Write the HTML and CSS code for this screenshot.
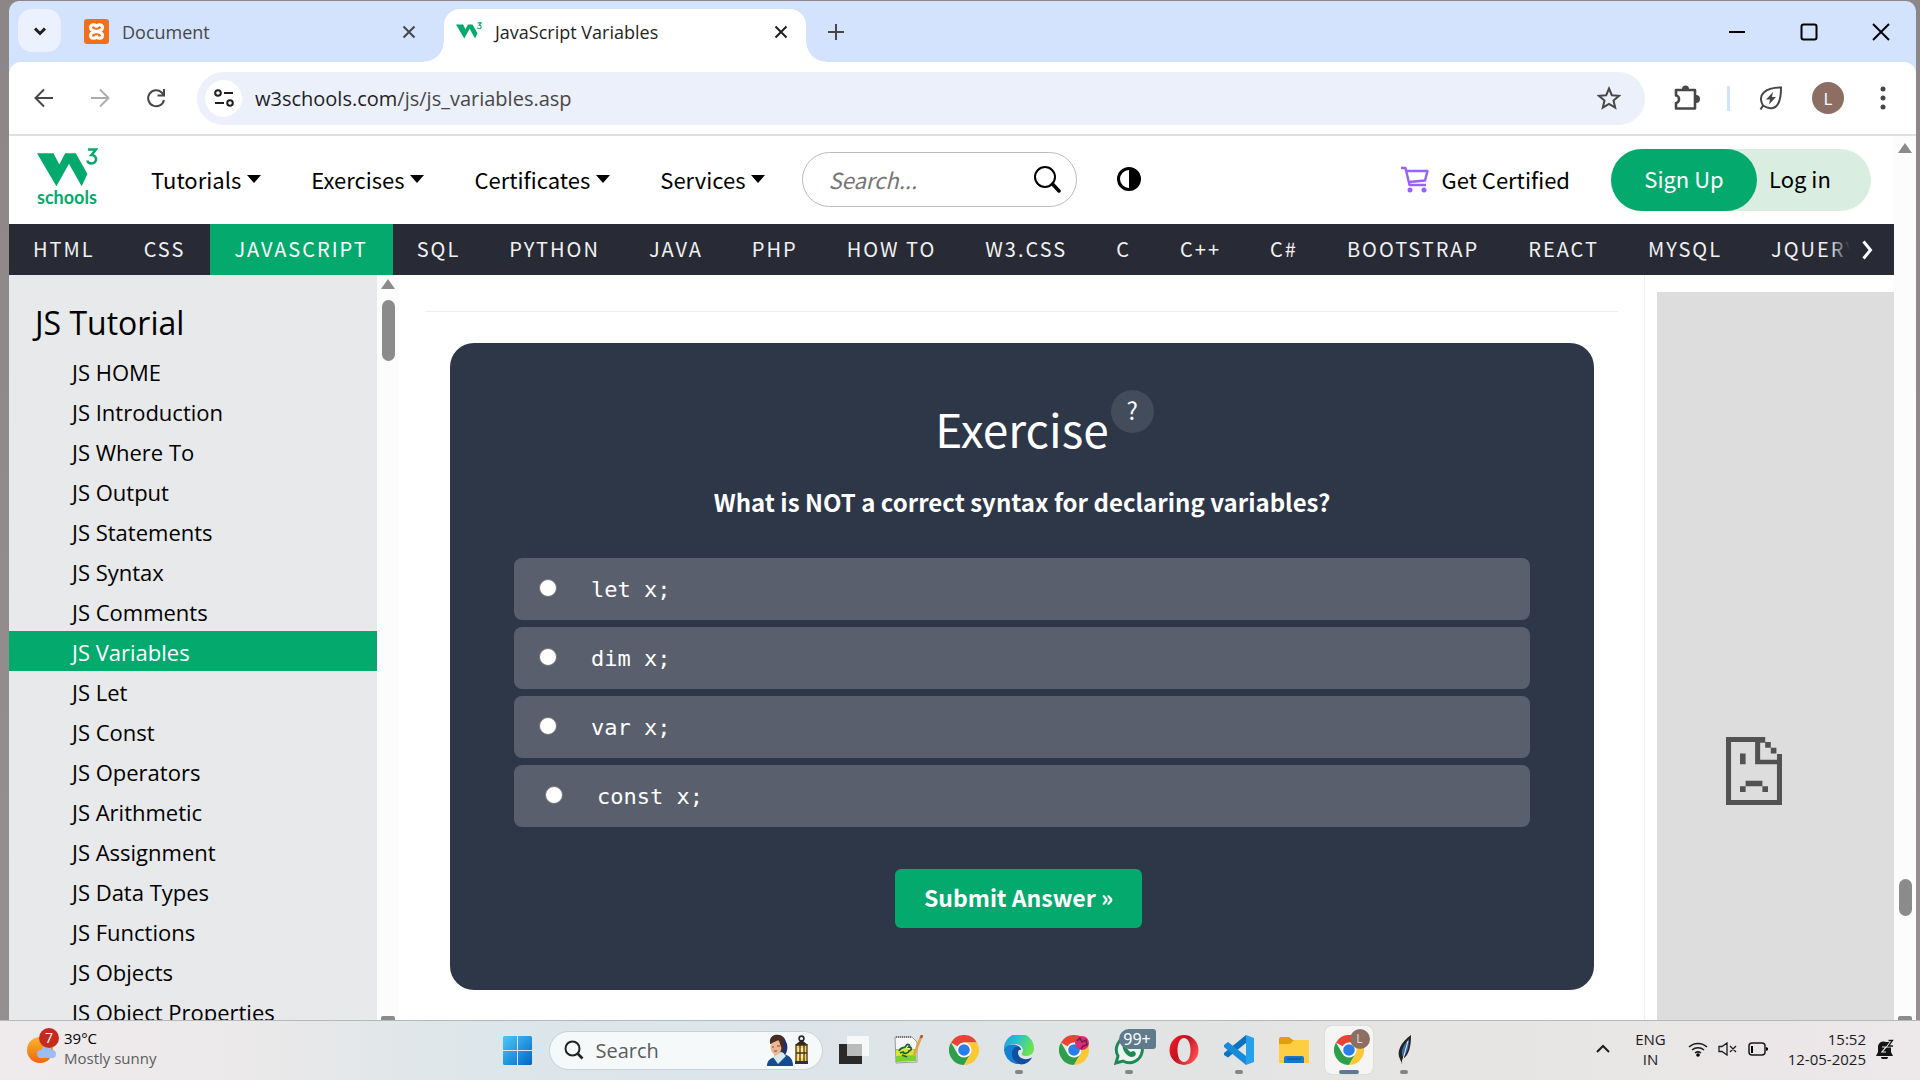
FILE: index.html
```html
<!DOCTYPE html>
<html lang="en">
<head>
<meta charset="utf-8">
<title>JavaScript Variables</title>
<link rel="stylesheet" href="styles.css">
</head>
<body>
<svg class="defs" aria-hidden="true">
  <symbol id="chrome" viewBox="0 0 30 30">
    <path d="M15 15 2 7.5A15 15 0 0 1 28 7.5H15z" fill="#ea4335"/>
    <path d="M2 7.5A15 15 0 0 0 15 30l6.500-11.250L15 15 8.500 18.750z" fill="#2e9e4b"/>
    <path d="M28 7.500A15 15 0 0 1 15 30l6.500-11.250L15 7.500z" fill="#fcc934"/>
    <circle cx="15" cy="15" r="7.500" fill="#fff"/><circle cx="15" cy="15" r="5.800" fill="#2b7de9"/>
  </symbol>
</svg>
<div class="desktop">
  <div class="window">
    <header class="tabstrip">
      <button class="tab-search" aria-label="Search tabs"><svg width="14" height="14" viewBox="0 0 14 14"><path d="M2 4.500l5 5 5-5" class="ln3"/></svg></button>
      <div class="tab">
        <svg width="25" height="25" viewBox="0 0 25 25"><rect width="25" height="25" rx="3" fill="#f0701c"/><path d="M12.500 12.500c-3-1-6-.8-6-3.800 0-4 6-4 6 0 0-4 6-4 6 0 0 3-3 2.800-6 3.800 3 1 6 .8 6 3.800 0 4-6 4-6 0 0 4-6 4-6 0 0-3 3-2.800 6-3.800z" fill="none" stroke="#fff" stroke-width="3"/><path d="M10 12.500h5" stroke="#fff" stroke-width="3"/></svg>
        <span class="tab-title">Document</span>
        <button class="x" aria-label="Close"><svg width="14" height="14" viewBox="0 0 14 14"><path d="M1.500 1.500l11 11M12.500 1.500l-11 11" class="ln2"/></svg></button>
      </div>
      <div class="tab active">
        <svg width="26" height="20" viewBox="0 0 61 46"><use href="#w3mark"/></svg>
        <span class="tab-title">JavaScript Variables</span>
        <button class="x" aria-label="Close"><svg width="14" height="14" viewBox="0 0 14 14"><path d="M1.500 1.500l11 11M12.500 1.500l-11 11" class="ln2"/></svg></button>
      </div>
      <button class="newtab" aria-label="New tab"><svg width="16" height="16" viewBox="0 0 16 16"><path d="M8 0v16M0 8h16" class="ln2"/></svg></button>
      <div class="winctl">
        <button aria-label="Minimize"><svg width="18" height="18" viewBox="0 0 18 18"><path d="M1 9h16" class="ln2"/></svg></button>
        <button aria-label="Maximize"><svg width="18" height="18" viewBox="0 0 18 18"><rect x="1.500" y="1.500" width="15" height="15" rx="2" class="ln2"/></svg></button>
        <button aria-label="Close window"><svg width="18" height="18" viewBox="0 0 18 18"><path d="M1 1l16 16M17 1L1 17" class="ln2"/></svg></button>
      </div>
    </header>
    <div class="toolbar">
      <button aria-label="Back"><svg width="20" height="20" viewBox="0 0 20 20"><path d="M19 10H2M10 1.500L1.500 10l8.500 8.500" class="ln2"/></svg></button>
      <button class="dim" aria-label="Forward"><svg width="20" height="20" viewBox="0 0 20 20"><path d="M1 10h17M10 1.500l8.500 8.500-8.500 8.500" class="ln2"/></svg></button>
      <button aria-label="Reload"><svg width="20" height="20" viewBox="0 0 20 20"><path d="M18 12a8 8 0 1 1-2.300-7.500L18 7M18 1v6.500h-6.500" class="ln2"/></svg></button>
      <div class="omnibox">
        <button class="tune" aria-label="Site information"><svg width="20" height="20" viewBox="0 0 20 20"><circle cx="4" cy="5" r="2.800" class="ln2"/><circle cx="16" cy="15" r="2.800" class="ln2"/><path d="M10 5h9M1 15h9" class="ln2"/></svg></button>
        <div class="url">w3schools.com<span>/js/js_variables.asp</span></div>
        <svg width="24" height="24" viewBox="0 0 24 24"><path d="M12 2.500l2.800 6.700 7.200.6-5.500 4.700 1.700 7.100L12 17.800l-6.200 3.800 1.700-7.100L2 9.800l7.200-.6z" class="ln2"/></svg>
      </div>
      <svg class="puzzle" width="28" height="28" viewBox="0 0 28 28"><path d="M3 6h19v18.500H3v-5.500c4 0 4-7.500 0-7.500z" fill="none" stroke="#474747" stroke-width="2.600" stroke-linejoin="round"/><path d="M9 5a3.500 3.500 0 0 1 7 0zM23 11a4 4 0 0 1 0 8z" fill="#474747"/></svg>
      <span class="bar"></span>
      <svg class="leaf" width="26" height="26" viewBox="0 0 26 26"><path d="M2.500 24.500L5 20.500C-1 10 7 2.500 23 2.500c0 13-3 22-12 20.500-3-.5-6-2.500-6-2.500z" class="ln2"/><path d="M15 7l-7 7.500h4l-1 5 7-7.500h-4z" fill="#474747"/></svg>
      <button class="avatar">L</button>
      <svg class="dots" width="6" height="24" viewBox="0 0 6 24"><circle cx="3" cy="3" r="2.500"/><circle cx="3" cy="12" r="2.500"/><circle cx="3" cy="21" r="2.500"/></svg>
    </div>
    <div class="viewport">
      <div class="page">
        <nav class="site">
          <a class="logo" href="#" aria-label="w3schools"><svg width="61" height="62" viewBox="0 0 61 62"><g id="w3mark"><path d="M0 6h17l6 13 6-13h11l12 24-6 14-13-26-13 26z" fill="#04aa6d" transform="scale(.97 .87) translate(0 0)"/><path d="M51 1.500h8l-4.500 5.500c6 0 6 8.500 0 8.500-2.500 0-4-1.500-4-3" fill="none" stroke="#04aa6d" stroke-width="2.600"/></g><text x="0" y="56" class="logotext">schools</text></svg></a>
          <a class="menu" href="#">Tutorials<i></i></a>
          <a class="menu" href="#">Exercises<i></i></a>
          <a class="menu" href="#">Certificates<i></i></a>
          <a class="menu" href="#">Services<i></i></a>
          <label class="search"><input type="text" placeholder="Search..." aria-label="Search"><svg width="28" height="28" viewBox="0 0 28 28"><circle cx="12" cy="12" r="10" fill="none" stroke="#000" stroke-width="2"/><path d="M19.500 19l6.500 7" stroke="#000" stroke-width="3.500" stroke-linecap="round"/></svg></label>
          <button class="contrast" aria-label="Toggle dark mode"><svg width="24" height="24" viewBox="0 0 24 24"><circle cx="12" cy="12" r="10.500" fill="none" stroke="#000" stroke-width="3"/><path d="M12 1a11 11 0 0 1 0 22z"/></svg></button>
          <a class="cert" href="#"><svg width="28" height="27" viewBox="0 0 28 27"><path d="M0 2h4.500l4 17H25M5.500 5H26.500l-2.500 9.500L8 16" fill="none" stroke="#9763f6" stroke-width="2.400" stroke-linejoin="round"/><circle cx="9" cy="24" r="2.500" fill="#9763f6"/><circle cx="23" cy="24" r="2.500" fill="#9763f6"/></svg>Get Certified</a>
          <div class="auth"><a class="signup" href="#">Sign Up</a><a class="login" href="#">Log in</a></div>
        </nav>
        <nav class="topics">
          <a href="#">HTML</a><a href="#">CSS</a><a href="#" class="on">JAVASCRIPT</a><a href="#">SQL</a><a href="#">PYTHON</a><a href="#">JAVA</a><a href="#">PHP</a><a href="#">HOW TO</a><a href="#">W3.CSS</a><a href="#">C</a><a href="#">C++</a><a href="#">C#</a><a href="#">BOOTSTRAP</a><a href="#">REACT</a><a href="#">MYSQL</a><a href="#">JQUERY</a>
          <button class="next" aria-label="Scroll right"><svg width="12" height="20" viewBox="0 0 12 20"><path d="M1.500 1.500L8.500 10l-7 8.500" fill="none" stroke="#fff" stroke-width="3"/></svg></button>
        </nav>
        <div class="content">
          <aside class="sidebar">
            <h2>JS Tutorial</h2>
            <a href="#">JS HOME</a><a href="#">JS Introduction</a><a href="#">JS Where To</a><a href="#">JS Output</a><a href="#">JS Statements</a><a href="#">JS Syntax</a><a href="#">JS Comments</a><a href="#" class="on">JS Variables</a><a href="#">JS Let</a><a href="#">JS Const</a><a href="#">JS Operators</a><a href="#">JS Arithmetic</a><a href="#">JS Assignment</a><a href="#">JS Data Types</a><a href="#">JS Functions</a><a href="#">JS Objects</a><a href="#">JS Object Properties</a>
          </aside>
          <div class="sbar side"><i class="up"></i><i class="thumb"></i><i class="down"></i></div>
          <main>
            <hr>
            <form class="card">
              <h1>Exercise<sup>?</sup></h1>
              <h3>What is NOT a correct syntax for declaring variables?</h3>
              <label><input type="radio" name="q">let x;</label>
              <label><input type="radio" name="q">dim x;</label>
              <label><input type="radio" name="q">var x;</label>
              <label class="last"><input type="radio" name="q">const x;</label>
              <button type="button">Submit Answer »</button>
            </form>
          </main>
          <div class="right"><div class="ad"><svg width="56" height="68" viewBox="0 0 10 12" preserveAspectRatio="none"><path fill="#525252" d="M0 0h7v1H6.100v3H9.100V3H10v9H0V0zM.9 .9v10.200h8.200V4.800H5.200V.9zM7 .9h1v1H7zM8 1.900h1v1H8zM2.500 2.900h1v1.900h-1zM3.500 7.700h3v1h-3zM2.500 8.700h1v1h-1zM6.500 8.700h1v1h-1z" fill-rule="evenodd"/></svg></div></div>
        </div>
      </div>
      <div class="sbar outer"><i class="up"></i><i class="thumb"></i><i class="down"></i></div>
    </div>
  </div>
  <footer class="taskbar">
    <div class="weather">
      <svg width="34" height="36" viewBox="0 0 34 36"><defs><linearGradient id="sun" x2="0" y2="1"><stop stop-color="#f5b82e"/><stop offset="1" stop-color="#f0650e"/></linearGradient></defs><circle cx="13" cy="22" r="13" fill="url(#sun)"/><path d="M14 30a4 4 0 0 1 0-8 6 6 0 0 1 11 0 4 4 0 0 1 0 8z" fill="#9dbcf2"/><circle cx="22" cy="10" r="10" fill="#c42b1c"/><text x="22" y="15" text-anchor="middle" class="badge">7</text></svg>
      <div><b>39°C</b><span>Mostly sunny</span></div>
    </div>
    <div class="apps">
      <button class="app start" aria-label="Start"><svg width="29" height="29" viewBox="0 0 29 29"><defs><linearGradient id="win" x2="1" y2="1"><stop stop-color="#4cc8fb"/><stop offset="1" stop-color="#0067c6"/></linearGradient></defs><path d="M1 0h13v14H0V1zM15 0h13l1 1v13H15zM0 15h14v14H1l-1-1zM15 15h14v13l-1 1H15z" fill="url(#win)"/></svg></button>
      <label class="tsearch"><svg width="20" height="20" viewBox="0 0 20 20"><circle cx="8.500" cy="8.500" r="7" fill="none" stroke="#222" stroke-width="2"/><path d="M13.500 13.500l5 5" stroke="#222" stroke-width="2.600"/></svg><input type="text" placeholder="Search" aria-label="Search Windows">
        <svg width="43" height="32" viewBox="0 0 43 32"><path d="M3 9C2 2 8 0 12 1c6 1 8 6 7 14l-3 5z" fill="#4a2c23"/><path d="M16 5c6 3 5 12 2 16l-3-4z" fill="#22306f"/><ellipse cx="9" cy="13" rx="5.500" ry="7.500" fill="#e9b795"/><path d="M7 18h7v7H7z" fill="#e9b795"/><path d="M3 10c0-6 3-9 8-9 6 0 7 7 5 14-2-1-3-5-4-9-3 1-5 2-9 4z" fill="#4a2c23"/><path d="M0 32c0-6 4-8 8-9l9-3c6 2 9 5 9 12z" fill="#164a91"/><path d="M6 23l9-5 4 4-8 8z" fill="#d5e9ee"/><path d="M5 13h2M10 12h3M7 17h3" stroke="#8f4134"/><circle cx="34.500" cy="4.500" r="2.400" fill="none" stroke="#292929" stroke-width="1.600"/><path d="M28 11l5-4h3l5 4z" fill="#292929"/><path d="M29 11h11v16H29z" fill="#ffd34f"/><path d="M31 14h7v10h-7z" fill="#ffe99a"/><path d="M29 11h11v17H29zM33 11v17M37 11v17M29 19h11" fill="none" stroke="#463518" stroke-width="1.300"/><path d="M28 27h13v3H28z" fill="#333"/></svg></label>
      <button class="app" aria-label="Task view"><svg width="30" height="30" viewBox="0 0 30 30"><path d="M0 9h23v20H0z" fill="#2b2a29"/><path d="M8 1h22v20H8z" fill="#f8f8f8" fill-opacity=".9"/><path d="M8 9h15v12H8z" fill="#bbb"/></svg></button>
      <button class="app" aria-label="Notepad++"><svg width="30" height="30" viewBox="0 0 30 30"><path d="M1 2h17l5 5v20L2 28z" fill="#f6f6f6" stroke="#999"/><path d="M2 2h16" stroke="#777" stroke-width="2" stroke-dasharray="1 1"/><path d="M2 14h20v12L2 27z" fill="#7fd02f"/><path d="M2 15l9-2 11 2v5L2 21z" fill="#d5e638"/><path d="M5 16c2-5 6-2 7-5 1-3 5-1 3 1 4 0 2 4 0 4-1 3-5 3-6 1l-3 1M8 20l5 2" fill="none" stroke="#1d6527" stroke-width="1.800"/><path d="M27 2L20 20" stroke="#e6a03c" stroke-width="2.500"/><path d="M28 0l-1 3" stroke="#b84b43" stroke-width="2.500"/></svg></button>
      <button class="app" aria-label="Chrome"><svg width="30" height="30"><use href="#chrome"/></svg></button>
      <button class="app run" aria-label="Edge"><svg width="30" height="30" viewBox="0 0 30 30"><defs><linearGradient id="eg" x2="1" y2=".4"><stop stop-color="#219be0"/><stop offset=".5" stop-color="#28c5cc"/><stop offset="1" stop-color="#6be24e"/></linearGradient></defs><path d="M0 14A15 15 0 0 1 30 13c0 6-4 8-8 8-3 0-5-1-4-3 3-5-2-9-7-9S2 11 0 14z" fill="url(#eg)"/><path d="M0 14c3-6 16-6 17 1-4-2-7 5-2 9 4 3 9 2 12-1A15 15 0 0 1 0 15z" fill="#1380d3"/><path d="M11 12c-6 5-3 15 6 17.500 5 0 9-3 11-7-8 4-14 0-14-5 0-2 1-3 3-3 0-2-3-4-6-2.500z" fill="#114f9f"/></svg></button>
      <button class="app" aria-label="Chrome profile"><svg width="30" height="30"><use href="#chrome"/><circle cx="23" cy="8" r="7" fill="#d62f75"/><path d="M18 6l3-3 2 4 4-2 1 5-4 1-2 3" fill="none" stroke="#7d1746" stroke-width="1.500"/></svg></button>
      <button class="app run" aria-label="WhatsApp"><svg width="30" height="30" viewBox="0 0 30 30"><path d="M2 28l2-7A13 13 0 1 1 9 26z" fill="#edf3f0" stroke="#1d8a54" stroke-width="3"/><path d="M9 9c1-3 4-2 4 0s-1 2 0 4 3 4 4 4 2-2 4 0 0 5-3 5C13 22 7 14 9 9z" fill="#1d8a54"/></svg><em>99+</em></button>
      <button class="app" aria-label="Opera"><svg width="30" height="30" viewBox="0 0 30 30"><defs><linearGradient id="op" x2="1" y2=".6"><stop stop-color="#ff1b2d"/><stop offset=".5" stop-color="#c3101d"/><stop offset="1" stop-color="#ff4a50"/></linearGradient></defs><path fill-rule="evenodd" d="M15 0a14.500 15 0 1 0 0 30 14.500 15 0 1 0 0-30zm0 3c4 0 6.500 5 6.500 12S19 27 15 27 8.500 22 8.500 15 11 3 15 3z" fill="url(#op)"/></svg></button>
      <button class="app run" aria-label="Visual Studio Code"><svg width="30" height="30" viewBox="0 0 30 30"><path d="M22 0v8L4 22.500 0 20v-2z" fill="#0b72c0"/><path d="M0 10l4-3 18 14v9L0 12z" fill="#168bd8"/><path d="M22 0l8 3v24l-8 3z" fill="#27a1ee"/></svg></button>
      <button class="app" aria-label="File Explorer"><svg width="30" height="30" viewBox="0 0 30 30"><path d="M0 4q0-2 2-2h8l4 3h14v6H0z" fill="#dfa00b"/><path d="M0 9h11l4-4h15v23H0z" fill="#ffcd42"/><path d="M5 28v-5q0-2 2-2h16q2 0 2 2v5z" fill="#1279cc"/><path d="M8 24h14" stroke="#0b4f91"/></svg></button>
      <button class="app current" aria-label="Chrome window"><svg width="30" height="30"><use href="#chrome"/></svg><strong>L</strong></button>
      <button class="app run" aria-label="Python IDLE"><svg width="30" height="30" viewBox="0 0 30 30"><path d="M22 0c0 12-2 20-8 24l-1 5-2-5c-4-7 1-17 11-24z" fill="#222"/><path d="M20 4c0 9-2 15-6 18-3-5 0-12 6-18z" fill="#356fae"/><path d="M19 6l-6 22" stroke="#eee"/></svg></button>
    </div>
    <div class="tray">
      <svg width="16" height="10" viewBox="0 0 16 10"><path d="M2 8l6-6 6 6" fill="none" stroke="#1b1b1b" stroke-width="2"/></svg>
      <div class="lang">ENG<br>IN</div>
      <svg width="20" height="16" viewBox="0 0 20 16"><path d="M1 6a13 13 0 0 1 18 0M4 9a9 9 0 0 1 12 0M7 12a5 5 0 0 1 6 0" fill="none" stroke="#1b1b1b" stroke-width="1.500"/><circle cx="10" cy="14" r="1.800"/></svg>
      <svg width="20" height="14" viewBox="0 0 20 14"><path d="M1 4.500h3L9 1v12L4 9.500H1zM12 4l6 6M18 4l-6 6" fill="none" stroke="#1b1b1b" stroke-width="1.300"/></svg>
      <svg width="20" height="14" viewBox="0 0 20 14"><rect x="1" y="1" width="16" height="12" rx="3" fill="none" stroke="#1b1b1b" stroke-width="1.500"/><path d="M3 4h2v7H3zM18 5l2 1v2l-2 1z"/></svg>
      <div class="clock">15:52<br>12-05-2025</div>
      <svg width="18" height="20" viewBox="0 0 18 20"><path d="M0 17l2-4V8a5.500 5.500 0 0 1 8-5h4v5h1v5l2 4zM5 18h7a3.500 2.500 0 0 1-7 0z" fill="#151515"/><path d="M6 8h4l-4 5h4" fill="none" stroke="#eee" stroke-width="1.200"/><path d="M12 1.500h4.500L12.500 7H17" fill="none" stroke="#eee" stroke-width="3"/><path d="M12.500 1.500h4L12.500 7H17" fill="none" stroke="#151515" stroke-width="1.300"/></svg>
    </div>
  </footer>
</div>
</body>
</html>
```
FILE: styles.css
```css
* { box-sizing: border-box; }
body { margin: 0; font-family: "Open Sans", "Noto Sans", sans-serif; color: #000; }
a { color: inherit; text-decoration: none; }
button { border: 0; padding: 0; background: none; font: inherit; color: inherit; display: flex; align-items: center; justify-content: center; }
input { font: inherit; border: 0; background: none; padding: 0; outline: 0; min-width: 0; }
svg { display: block; flex: none; }
.defs { position: absolute; width: 0; height: 0; }
.ln2 { fill: none; stroke: currentColor; stroke-width: 2; }
.ln3 { fill: none; stroke: currentColor; stroke-width: 3; }

.desktop { height: 100vh; display: flex; flex-direction: column; background: linear-gradient(#8c8686, #969092); overflow: hidden; }
.window { flex: 1; min-height: 0; display: flex; flex-direction: column; margin: 1px 4px 0 9px; border-radius: 10px 10px 0 0; background: #d3e2fd; overflow: hidden; }

/* Browser tabs */
.tabstrip { height: 61px; flex: none; display: flex; align-items: flex-start; padding: 8px 8px 0 9px; color: #1f1f1f; }
.tab-search { width: 43px; height: 43px; border-radius: 14px; background: #ebf1fe; }
.tab { width: 369px; height: 53px; display: flex; align-items: center; padding: 0 14px 8px 23px; font-size: 18px; color: #474747; }
.tab:not(.active) { margin-right: 14px; }
.tab-title { flex: 1; margin-left: 13px; white-space: nowrap; }
.tab.active { position: relative; width: 362px; padding: 0 18px 8px 12px; border-radius: 16px 16px 0 0; background: #fff; color: #1f1f1f; }
.tab.active::before, .tab.active::after { content: ""; position: absolute; bottom: 0; width: 20px; height: 20px; }
.tab.active::before { right: 100%; background: radial-gradient(circle at 0 0, #d3e2fd 19px, #fff 20px); }
.tab.active::after { left: 100%; background: radial-gradient(circle at 100% 0, #d3e2fd 19px, #fff 20px); }
.newtab { width: 60px; height: 46px; color: #474747; }
.winctl { margin-left: auto; display: flex; gap: 54px; padding: 14px 18px 0 0; color: #000; }

.toolbar { height: 74px; flex: none; display: flex; align-items: center; padding: 0 30px 0 25px; background: #fff; border-radius: 12px 12px 0 0; border-bottom: 2px solid #dfe0e1; color: #474747; }
.toolbar > button + button { margin-left: 36px; }
.toolbar .dim { color: #adadad; }
.omnibox { flex: 1; height: 53px; margin-left: 31px; display: flex; align-items: center; padding: 0 24px 0 8px; border-radius: 27px; background: #ecf0fa; }
.tune { width: 37px; height: 37px; border-radius: 50%; background: #fff; color: #1f1f1f; }
.url { flex: 1; margin-left: 13px; font-size: 20px; color: #1f1f1f; }
.url span { color: #474747; }
.puzzle { margin-left: 28px; }
.bar { width: 3px; height: 25px; margin-left: 26px; background: #d3e2fd; }
.leaf { margin-left: 28px; }
.toolbar > .avatar { width: 32px; height: 32px; margin: 0 36px 0 28px; border-radius: 50%; background: #8d6e63; color: #fff; font-size: 17px; }
.dots { fill: #474747; }

.viewport { flex: 1; min-height: 0; display: flex; background: #fff; }
.page { flex: 1; min-width: 0; display: flex; flex-direction: column; }

/* Site header */
.site { height: 88px; flex: none; display: flex; align-items: center; padding: 0 23px 2px 28px; font-family: "Noto Sans CJK SC", sans-serif; font-size: 22px; }
.logo { margin-right: 53px; }
.logotext { font: 700 18px Lato, sans-serif; fill: #04aa6d; }
.menu { display: flex; align-items: center; margin-right: 50px; }
.menu i { margin-left: 6px; border: 7px solid transparent; border-top: 8px solid #000; border-bottom: 0; }
.search { width: 275px; height: 55px; margin-left: -13px; display: flex; align-items: center; padding: 0 15px 0 25px; border: 1px solid #bbb; border-radius: 28px; }
.search input { flex: 1; font-style: italic; }
.search input::placeholder { color: #757575; }
.contrast { margin-left: 40px; }
.cert { margin-left: auto; display: flex; align-items: center; gap: 13px; }
.auth { display: flex; margin: 2px 0 0 41px; height: 62px; line-height: 58px; border-radius: 31px; background: #d9eee1; }
.signup { width: 146px; border-radius: 31px; background: #04aa6d; color: #fff; text-align: center; }
.login { width: 114px; padding-left: 12px; }

.topics { position: relative; height: 51px; flex: none; display: flex; overflow: hidden; background: #282a35; color: #f1f1f1; font-family: "Noto Sans CJK SC", sans-serif; font-size: 20px; line-height: 50px; letter-spacing: 2px; white-space: nowrap; }
.topics a { padding: 0 25px 0 24px; }
.topics .on { background: #04aa6d; color: #fff; }
.next { position: absolute; right: 0; top: 0; width: 64px; height: 51px; padding-left: 12px; background: linear-gradient(90deg, #282a3500, #282a35 20px); }

.content { flex: 1; min-height: 0; display: flex; }
.sidebar { width: 368px; overflow: hidden; background: #e7e9eb; font-size: 22px; line-height: 38px; }
.sidebar h2 { margin: 0; padding: 24px 26px 4px; font-weight: 400; font-size: 32px; line-height: 48px; }
.sidebar a { display: block; padding: 2px 0 0 63px; }
.sidebar .on { background: #04aa6d; color: #fff; }

.sbar { width: 22px; flex: none; display: flex; flex-direction: column; align-items: center; background: #fcfcfc; overflow: hidden; }
.sbar i { flex: none; }
.up { border: 7px solid transparent; border-top: 0; border-bottom: 10px solid #8b8b8b; }
.thumb { width: 13px; border-radius: 7px; background: #8b8b8b; }
.down { width: 14px; height: 4px; margin-top: auto; background: #8b8b8b; border-radius: 2px 2px 0 0; }
.side { padding-top: 4px; }
.side .thumb { height: 61px; margin-top: 11px; }
.outer { padding-top: 7px; }
.outer .thumb { height: 37px; margin-top: 726px; }

main { flex: 1; min-width: 0; padding: 36px 26px 0; }
hr { margin: 0 0 31px; border: 0; border-top: 1px solid #eee; }
.card { height: 647px; margin: 0 24px 0 25px; padding: 47px 64px; border-radius: 24px; background: #2d3748; color: #fff; font-family: "Noto Sans CJK SC", sans-serif; text-align: center; }
.card h1 { margin: 0; display: flex; justify-content: center; font-size: 46px; line-height: 76px; font-weight: 400; }
.card sup { width: 43px; height: 43px; margin: 0 -45px 0 2px; border-radius: 50%; background: #434c5b; font-size: 24px; line-height: 40px; }
.card h3 { margin: 17px 0 38px; font-size: 24px; line-height: 37px; }
.card label { display: flex; align-items: center; height: 62px; margin-bottom: 7px; padding-left: 25px; border-radius: 8px; background: #595f6d; font-family: "DejaVu Sans Mono", monospace; font-size: 22px; }
.card label.last { padding-left: 31px; }
.card input { appearance: none; width: 18px; height: 18px; margin: 0 34px 2px 0; border: 1px solid #767676; border-radius: 50%; background: #fff; }
.card button { width: 247px; height: 59px; margin: 42px auto 0 381px; padding-bottom: 3px; border-radius: 6px; background: #04aa6d; font-weight: 700; font-size: 23px; }
.right { width: 250px; flex: none; padding: 17px 0 0 12px; border-left: 1px solid #eee; }
.ad { height: 100%; padding: 445px 0 0 69px; background: #ddd; }

/* Taskbar */
.taskbar { height: 60px; flex: none; display: flex; align-items: center; padding: 0 26px 1px 27px; border-top: 1px solid #b5bab9; background: linear-gradient(90deg, #efebec, #ece9ea 12%, #dde6e9 24%, #dbe5ec 36%, #e1e4e3 60%, #e7e5e4 78%, #ede8ea); font-size: 15px; }
.weather { flex: 1; display: flex; gap: 3px; line-height: 20px; padding-bottom: 4px; }
.weather b, .weather span { display: block; font-weight: 400; }
.weather span { color: #5c5c5c; }
.badge { font-size: 14px; fill: #fff; }
.apps { display: flex; align-items: center; padding-left: 7px; }
.app { position: relative; width: 48px; height: 48px; margin-right: 7px; }
.tsearch { width: 274px; height: 39px; margin-right: 7px; display: flex; align-items: center; padding: 0 12px 0 14px; border: 1px solid #c9d1d4; border-radius: 20px; background: #f6f9fa; font-size: 20px; }
.tsearch input { flex: 1; margin-left: 12px; }
.tsearch input::placeholder { color: #5c5c5c; }
.run::after, .current::after { content: ""; position: absolute; bottom: 0; left: 20px; width: 8px; height: 4px; border-radius: 2px; background: #858585; }
.current { background: #f5f5f4; border-radius: 6px; box-shadow: 0 0 1px #aaa; }
.current::after { left: 14px; width: 20px; background: #5f7a8a; }
.app em { position: absolute; left: 14px; top: 3px; width: 37px; height: 20px; border-radius: 10px 3px 3px 10px; background: #5f7a8a; color: #fff; font: 16px/20px "Noto Sans", sans-serif; }
.app strong { position: absolute; left: 25px; top: 3px; width: 20px; height: 20px; border-radius: 50%; background: #8d6e63; color: #e3dada; font-size: 12px; line-height: 20px; font-weight: 400; }
.tray { flex: 1; display: flex; align-items: center; justify-content: flex-end; line-height: 20px; padding-bottom: 2px; color: #1b1b1b; gap: 10px; }
.lang { text-align: center; margin: 0 12px 0 14px; }
.clock { text-align: right; margin-left: 10px; }
```
